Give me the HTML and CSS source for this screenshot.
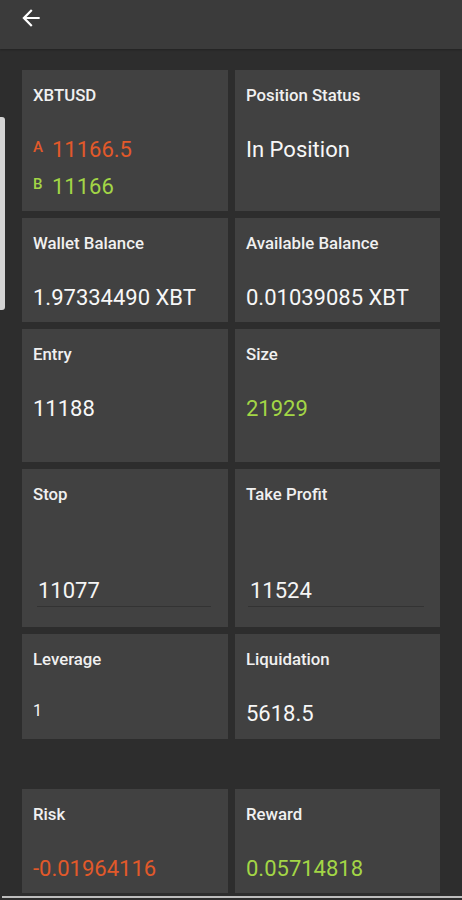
FILE: index.html
```html
<!DOCTYPE html>
<html lang="en">
<head>
<meta charset="utf-8">
<title>XBTUSD Position</title>
<link rel="stylesheet" href="styles.css">
</head>
<body>
<header class="appbar">
  <button class="back" aria-label="Back">
    <svg viewBox="0 0 24 24" width="26" height="26"><path d="M20 11H7.83l5.59-5.59L12 4l-8 8 8 8 1.41-1.41L7.83 13H20v-2z" fill="#ffffff"/></svg>
  </button>
</header>
<main class="content">
  <section class="grid">
    <div class="card r1">
      <div class="label">XBTUSD</div>
      <div class="quote ask"><span class="tag">A</span><span class="num">11166.5</span></div>
      <div class="quote bid"><span class="tag">B</span><span class="num">11166</span></div>
    </div>
    <div class="card r1">
      <div class="label">Position Status</div>
      <div class="value">In Position</div>
    </div>
    <div class="card">
      <div class="label">Wallet Balance</div>
      <div class="value">1.97334490 XBT</div>
    </div>
    <div class="card">
      <div class="label">Available Balance</div>
      <div class="value">0.01039085 XBT</div>
    </div>
    <div class="card">
      <div class="label">Entry</div>
      <div class="value">11188</div>
    </div>
    <div class="card">
      <div class="label">Size</div>
      <div class="value green">21929</div>
    </div>
    <div class="card">
      <div class="label">Stop</div>
      <div class="field field-left">11077</div>
    </div>
    <div class="card">
      <div class="label">Take Profit</div>
      <div class="field field-right">11524</div>
    </div>
    <div class="card">
      <div class="label">Leverage</div>
      <div class="value small">1</div>
    </div>
    <div class="card">
      <div class="label">Liquidation</div>
      <div class="value">5618.5</div>
    </div>
  </section>
  <section class="grid outcome">
    <div class="card">
      <div class="label">Risk</div>
      <div class="value orange">-0.01964116</div>
    </div>
    <div class="card">
      <div class="label">Reward</div>
      <div class="value green">0.05714818</div>
    </div>
  </section>
</main>
<div class="vscroll"></div>
<div class="hscroll"></div>
</body>
</html>
```
FILE: styles.css
```css
html, body {
  margin: 0;
  padding: 0;
}
body {
  background: #2d2d2d;
  font-family: Roboto, "Noto Sans", "Liberation Sans", sans-serif;
  color: #f5f5f5;
  width: 462px;
  height: 900px;
  overflow: hidden;
  position: relative;
}
.appbar {
  height: 49px;
  background: #3b3b3b;
  display: flex;
  align-items: center;
  padding-left: 18px;
  box-sizing: border-box;
  box-shadow: 0 1px 2px rgba(0,0,0,0.25);
}
.back {
  background: none;
  border: 0;
  padding: 0;
  width: 26px;
  height: 26px;
  margin-top: -14px;
  display: block;
}
.back svg { display: block; }
.content {
  padding: 21px 22px 0 22px;
}
.grid {
  display: grid;
  grid-template-columns: 206px 205px;
  grid-template-rows: 141px 104px 133px 158px 105px;
  gap: 7px;
}
.grid.outcome {
  grid-template-rows: 104px;
  margin-top: 50px;
}
.card {
  background: #414141;
  padding: 16px 0 0 11px;
  box-sizing: border-box;
  display: flex;
  flex-direction: column;
  align-items: flex-start;
}
.label {
  font-size: 16.8px;
  font-weight: 500;
  line-height: 18px;
  color: #f0f0f0;
}
.value {
  font-size: 22px;
  line-height: 26px;
  margin-top: 33px;
  color: #f7f7f7;
}
.value.small {
  font-size: 16px;
  line-height: 20px;
}
.green { color: #a3d646; }
.orange { color: #e2592a; }
.quote {
  display: flex;
  align-items: flex-start;
  font-size: 22px;
  line-height: 26px;
}
.quote .tag {
  font-size: 15px;
  font-weight: 500;
  line-height: 15px;
  margin-top: 3px;
  width: 19px;
}
.quote.ask {
  margin-top: 33px;
  color: #e2592a;
}
.quote.bid {
  margin-top: 11px;
  color: #a3d646;
}
.field {
  font-size: 22px;
  line-height: 26px;
  margin-top: 75px;
  padding-bottom: 2px;
  border-bottom: 1px solid #333333;
  align-self: stretch;
}
.field-left {
  margin-left: 4px;
  margin-right: 17px;
  padding-left: 1px;
}
.field-right {
  margin-left: 2px;
  margin-right: 16px;
  padding-left: 2px;
}
.vscroll {
  position: absolute;
  left: 0;
  top: 117px;
  width: 5px;
  height: 193px;
  background: #d4d4d4;
  border-radius: 0 3px 3px 0;
}
.hscroll {
  position: absolute;
  left: 2px;
  right: 0;
  top: 896px;
  height: 2px;
  background: #bdbdbd;
}
```
